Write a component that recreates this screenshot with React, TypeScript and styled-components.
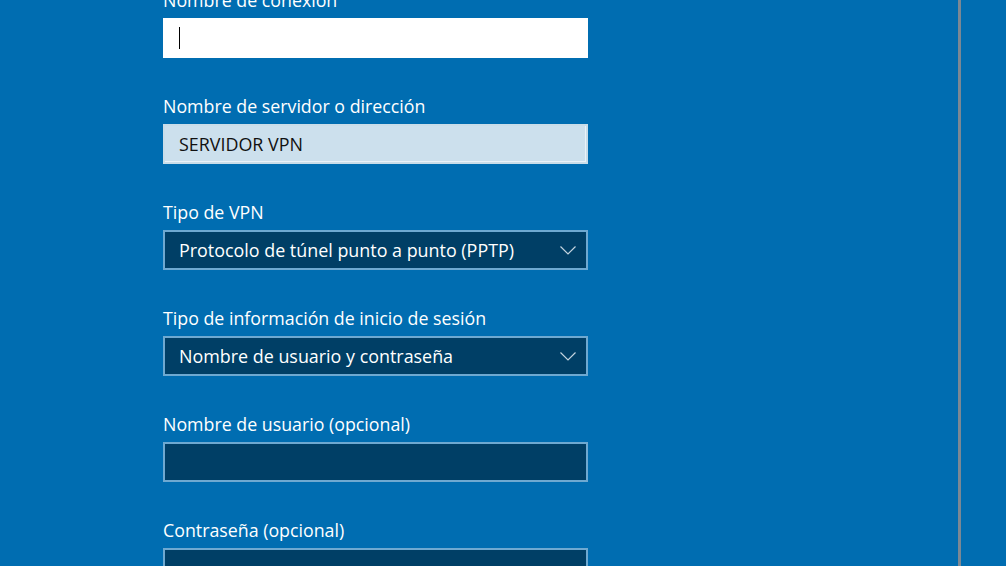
import React from "react";
import styled, { createGlobalStyle } from "styled-components";

const GlobalStyle = createGlobalStyle`
  html, body {
    margin: 0;
    padding: 0;
    background: #006db1;
    overflow: hidden;
  }
`;

const Page = styled.div`
  display: flex;
  width: 1006px;
  height: 566px;
  background: #006db1;
  overflow: hidden;
  font-family: "Open Sans", "Noto Sans", sans-serif;
`;

const Panel = styled.div`
  width: 958px;
  padding-left: 163px;
  box-sizing: border-box;
`;

const Divider = styled.div`
  width: 3px;
  background: #7b8894;
`;

const Side = styled.div`
  flex: 1;
`;

const Form = styled.div`
  display: flex;
  flex-direction: column;
  gap: 36px;
  margin-top: -12px;
  width: 425px;
`;

const Group = styled.div`
  display: flex;
  flex-direction: column;
`;

const Label = styled.div`
  color: #ffffff;
  font-size: 17.8px;
  line-height: 24px;
  height: 24px;
  margin-bottom: 6px;
  white-space: nowrap;
`;

type Variant = "active" | "filled" | "dark";

const Field = styled.div<{ $variant: Variant }>`
  box-sizing: border-box;
  height: 40px;
  display: flex;
  align-items: center;
  padding: 0 10px 0 14px;
  font-size: 17.9px;
  white-space: nowrap;
  border: 2px solid
    ${(p) =>
      p.$variant === "active"
        ? "#ffffff"
        : p.$variant === "filled"
        ? "#c9dde9"
        : "#6ea9d1"};
  background: ${(p) =>
    p.$variant === "active"
      ? "#ffffff"
      : p.$variant === "filled"
      ? "#cce0ed"
      : "#003f66"};
  color: ${(p) => (p.$variant === "dark" ? "#ffffff" : "#111111")};
  box-shadow: ${(p) =>
    p.$variant === "filled" ? "inset -1px -1px 0 #eaf2f8" : "none"};
`;

const Caret = styled.span`
  width: 1px;
  height: 22px;
  background: #000000;
`;

const Value = styled.span`
  flex: 1;
`;

const Chevron = () => (
  <svg width="16" height="9" viewBox="0 0 16 9">
    <polyline
      points="0.5,0.5 8,8 15.5,0.5"
      fill="none"
      stroke="#c3d3df"
      strokeWidth="1.2"
    />
  </svg>
);

export default function App() {
  return (
    <Page>
      <GlobalStyle />
      <Panel>
        <Form>
          <Group>
            <Label>Nombre de conexión</Label>
            <Field $variant="active">
              <Caret />
            </Field>
          </Group>
          <Group>
            <Label>Nombre de servidor o dirección</Label>
            <Field $variant="filled">
              <Value>SERVIDOR VPN</Value>
            </Field>
          </Group>
          <Group>
            <Label>Tipo de VPN</Label>
            <Field $variant="dark">
              <Value>Protocolo de túnel punto a punto (PPTP)</Value>
              <Chevron />
            </Field>
          </Group>
          <Group>
            <Label>Tipo de información de inicio de sesión</Label>
            <Field $variant="dark">
              <Value>Nombre de usuario y contraseña</Value>
              <Chevron />
            </Field>
          </Group>
          <Group>
            <Label>Nombre de usuario (opcional)</Label>
            <Field $variant="dark" />
          </Group>
          <Group>
            <Label>Contraseña (opcional)</Label>
            <Field $variant="dark" />
          </Group>
        </Form>
      </Panel>
      <Divider />
      <Side />
    </Page>
  );
}
